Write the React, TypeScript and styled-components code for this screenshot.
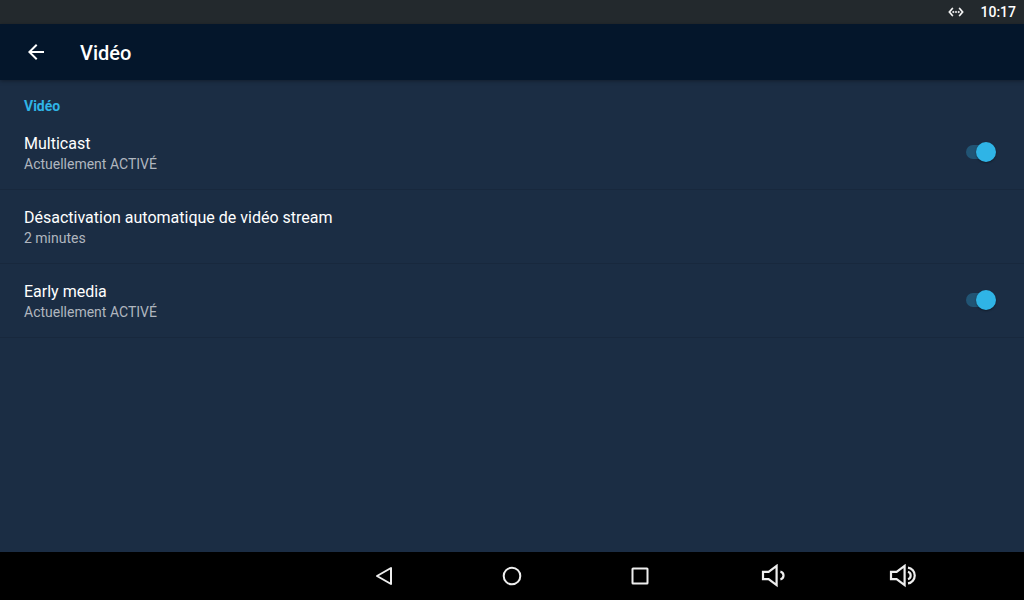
import React, { useState } from "react";
import styled, { createGlobalStyle } from "styled-components";

const GlobalStyle = createGlobalStyle`
  *, *::before, *::after { box-sizing: border-box; }
  body {
    margin: 0;
    background: #1b2d44;
    color: #ffffff;
    font-family: Roboto, "Liberation Sans", sans-serif;
  }
`;

const Screen = styled.div`
  display: flex;
  flex-direction: column;
  min-height: 100vh;
`;

const StatusBar = styled.div`
  display: flex;
  align-items: center;
  justify-content: flex-end;
  gap: 16px;
  height: 24px;
  padding: 0 8px;
  background: #23292d;
`;

const Clock = styled.time`
  font-size: 14px;
  line-height: 24px;
  font-weight: 500;
`;

const AppBar = styled.header`
  display: flex;
  align-items: center;
  gap: 20px;
  height: 56px;
  padding: 0 12px;
  background: #04162b;
  box-shadow: 0 1px 4px rgba(0, 0, 0, 0.35);
`;

const BackButton = styled.button`
  display: flex;
  align-items: center;
  justify-content: center;
  width: 48px;
  height: 48px;
  padding: 0;
  border: 0;
  background: none;
  color: inherit;
`;

const Title = styled.h1`
  margin: 0;
  padding-top: 2px;
  font-size: 20px;
  line-height: 24px;
  font-weight: 500;
`;

const Settings = styled.main`
  flex: 1;
`;

const Category = styled.h2`
  margin: 0;
  padding: 16px 24px 0;
  color: #2fb4e6;
  font-size: 14px;
  line-height: 20px;
  font-weight: 700;
`;

const Row = styled.label`
  display: flex;
  align-items: center;
  justify-content: space-between;
  width: 100%;
  padding: 16px 24px 17px;
  border: 0;
  border-bottom: 1px solid #18283d;
  background: none;
  color: inherit;
  font-family: inherit;
  text-align: left;
`;

const RowText = styled.span`
  display: flex;
  flex-direction: column;
`;

const RowTitle = styled.span`
  font-size: 16px;
  line-height: 24px;
`;

const RowSummary = styled.span`
  color: #b0b6bf;
  font-size: 14px;
  line-height: 16px;
`;

const Switch = styled.input`
  appearance: none;
  position: relative;
  display: flex;
  align-items: center;
  width: 38px;
  height: 20px;
  margin: 0;
  padding: 0 4px;

  &::before {
    content: "";
    width: 28px;
    height: 14px;
    border-radius: 7px;
    background: ${(p) => (p.checked ? "#215474" : "#49566a")};
  }

  &::after {
    content: "";
    position: absolute;
    top: 0;
    left: ${(p) => (p.checked ? "14px" : "0")};
    width: 20px;
    height: 20px;
    border-radius: 50%;
    background: ${(p) => (p.checked ? "#2fb4e6" : "#bdbdbd")};
    box-shadow: 0 1px 2px rgba(0, 0, 0, 0.4);
  }
`;

const NavBar = styled.nav`
  display: grid;
  grid-template-columns: 5fr repeat(5, 2fr) 1fr;
  height: 48px;
  background: #000000;
`;

const NavButton = styled.button`
  display: flex;
  align-items: center;
  justify-content: center;
  padding: 0;
  border: 0;
  background: none;
  color: #eeeeee;

  &:first-child {
    grid-column-start: 2;
  }
`;

const NavIcon = styled.svg`
  width: 48px;
  height: 24px;
  fill: none;
  stroke: currentColor;
  stroke-width: 2;
`;

function SwitchRow({ title, on }: { title: string; on: boolean }) {
  const [checked, setChecked] = useState(on);
  return (
    <Row>
      <RowText>
        <RowTitle>{title}</RowTitle>
        <RowSummary>Actuellement {checked ? "ACTIVÉ" : "DÉSACTIVÉ"}</RowSummary>
      </RowText>
      <Switch
        type="checkbox"
        role="switch"
        checked={checked}
        onChange={(e) => setChecked(e.target.checked)}
      />
    </Row>
  );
}

export default function App() {
  return (
    <Screen>
      <GlobalStyle />
      <StatusBar>
        <svg
          width="16"
          height="16"
          viewBox="0 0 24 24"
          fill="#ffffff"
          stroke="#ffffff"
          strokeWidth="0.6"
          aria-hidden="true"
        >
          <path d="M7.77 6.76L6.23 5.48.82 12l5.41 6.52 1.54-1.28L3.42 12l4.35-5.24zM7 13h2v-2H7v2zm10-2h-2v2h2v-2zm-6 2h2v-2h-2v2zm6.77-7.52l-1.54 1.28L20.58 12l-4.35 5.24 1.54 1.28L23.18 12l-5.41-6.52z" />
        </svg>
        <Clock>10:17</Clock>
      </StatusBar>
      <AppBar>
        <BackButton aria-label="Retour">
          <svg width="24" height="24" viewBox="0 0 24 24" fill="currentColor">
            <path d="M20 11H7.83l5.59-5.59L12 4l-8 8 8 8 1.41-1.41L7.83 13H20v-2z" />
          </svg>
        </BackButton>
        <Title>Vidéo</Title>
      </AppBar>
      <Settings>
        <Category>Vidéo</Category>
        <SwitchRow title="Multicast" on />
        <Row as="button">
          <RowText>
            <RowTitle>Désactivation automatique de vidéo stream</RowTitle>
            <RowSummary>2 minutes</RowSummary>
          </RowText>
        </Row>
        <SwitchRow title="Early media" on />
      </Settings>
      <NavBar>
        <NavButton aria-label="Précédent">
          <NavIcon viewBox="0 0 48 24">
            <path d="M31 4v16L17 12z" strokeLinejoin="round" />
          </NavIcon>
        </NavButton>
        <NavButton aria-label="Accueil">
          <NavIcon viewBox="0 0 48 24">
            <circle cx="24" cy="12" r="8.3" />
          </NavIcon>
        </NavButton>
        <NavButton aria-label="Applications récentes">
          <NavIcon viewBox="0 0 48 24">
            <rect x="16.5" y="4.5" width="15" height="15" rx="0.5" />
          </NavIcon>
        </NavButton>
        <NavButton aria-label="Baisser le volume">
          <NavIcon viewBox="0 0 48 24">
            <path d="M19 7.8h5.6l8-5.9v19.2l-8-5.9H19z" strokeWidth="2.2" />
            <path d="M36.4 7.6a4 4 0 0 1 0 7.8" strokeWidth="2.2" />
          </NavIcon>
        </NavButton>
        <NavButton aria-label="Augmenter le volume">
          <NavIcon viewBox="0 0 48 24">
            <path d="M19 7.8h5.6l8-5.9v19.2l-8-5.9H19z" strokeWidth="2.2" />
            <path
              d="M36 7.8a3.9 3.9 0 0 1 0 7.4M36 3.6a8 8 0 0 1 0 15.8"
              strokeWidth="2.2"
            />
          </NavIcon>
        </NavButton>
      </NavBar>
    </Screen>
  );
}
